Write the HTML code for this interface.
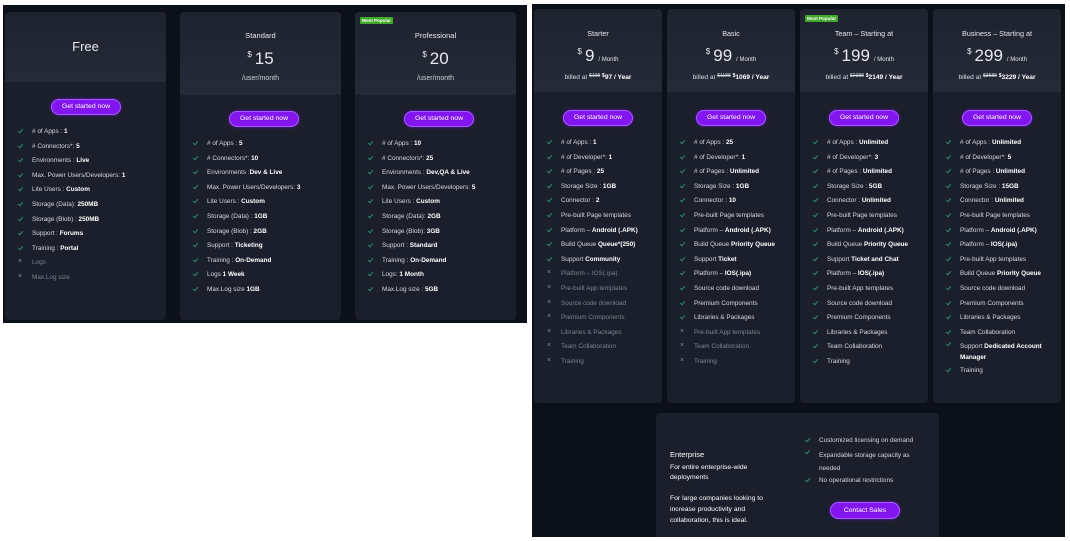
<!DOCTYPE html>
<html><head><meta charset="utf-8"><style>
*{margin:0;padding:0;box-sizing:border-box}
body{width:1070px;height:541px;background:#fff;position:relative;overflow:hidden;font-family:"Liberation Sans",sans-serif;color:#e6e8ee}
.panel{position:absolute;background:#0c1019}
.card{position:absolute;background:#1b1f2b;border-radius:4px;overflow:hidden}
.hd{position:absolute;left:0;top:0;width:100%;background:linear-gradient(#1f2330,#252a37)}
.t{position:absolute;left:0;width:100%;text-align:center;white-space:nowrap}
.btn{position:absolute;height:16px;border-radius:9px;background:#8316ee;border:1px solid #a45cff;color:#fff;font-size:6.8px;line-height:14px;text-align:center;box-shadow:0 0 3px #6a12c4}
ul{position:absolute;list-style:none}
li{height:14.6px;font-size:6.4px;line-height:8px;white-space:nowrap;color:#d5d8e0;position:relative;padding-left:14px}
li::before{content:"";position:absolute;left:1px;top:0px;width:2px;height:4px;border:solid #2d8a68;border-width:0 1.2px 1.2px 0;transform:rotate(40deg)}
li.x{color:#7d828f}
li.x::before{content:"×";border:0;transform:none;width:auto;height:auto;top:-1px;left:0;color:#8a8f9b;font-size:7px}
b{color:#fff}
.badge{position:absolute;background:#41a82a;color:#fff;font-size:4.6px;font-weight:bold;padding:1px 2px;border-radius:1px}
.pr{font-size:17px}
.pr sup{font-size:8px;vertical-align:7px;margin-right:3px}
.mo{font-size:6px;margin-left:4px}
.bl{font-size:6.6px;color:#d9dce4}
.bl s{font-size:5px;vertical-align:2px}
</style></head><body>

<div class="panel" style="left:3px;top:5px;width:524px;height:318px"></div>
<div class="panel" style="left:532px;top:4px;width:533px;height:533px"></div>

<!-- Free -->
<div class="card" style="left:5px;top:12px;width:161px;height:308px">
<div class="hd" style="height:70px"></div>
<div class="t" style="top:27px;font-size:13px">Free</div>
<div class="btn" style="left:46px;top:87px;width:70px">Get started now</div>
<ul style="left:13px;top:116px">
<li># of Apps : <b>1</b></li><li># Connectors*: <b>5</b></li><li>Environments : <b>Live</b></li><li>Max. Power Users/Developers: <b>1</b></li><li>Lite Users : <b>Custom</b></li><li>Storage (Data): <b>250MB</b></li><li>Storage (Blob) : <b>250MB</b></li><li>Support : <b>Forums</b></li><li>Training : <b>Portal</b></li><li class="x">Logs</li><li class="x">Max.Log size</li>
</ul></div>

<!-- Standard -->
<div class="card" style="left:180px;top:12px;width:161px;height:308px">
<div class="hd" style="height:83px"></div>
<div class="t" style="top:19px;font-size:7.5px">Standard</div>
<div class="t pr" style="top:37px"><sup>$</sup>15</div>
<div class="t" style="top:63px;font-size:7px;color:#cdd0d8">/user/month</div>
<div class="btn" style="left:49px;top:99px;width:70px">Get started now</div>
<ul style="left:13px;top:128px">
<li># of Apps : <b>5</b></li><li># Connectors*: <b>10</b></li><li>Environments :<b>Dev &amp; Live</b></li><li>Max. Power Users/Developers: <b>3</b></li><li>Lite Users : <b>Custom</b></li><li>Storage (Data) : <b>1GB</b></li><li>Storage (Blob) : <b>2GB</b></li><li>Support : <b>Ticketing</b></li><li>Training : <b>On-Demand</b></li><li>Logs <b>1 Week</b></li><li>Max.Log size <b>1GB</b></li>
</ul></div>

<!-- Professional -->
<div class="card" style="left:355px;top:12px;width:161px;height:308px">
<div class="hd" style="height:83px"></div>
<div class="badge" style="left:5px;top:5px">Most Popular</div>
<div class="t" style="top:19px;font-size:7.5px">Professional</div>
<div class="t pr" style="top:37px"><sup>$</sup>20</div>
<div class="t" style="top:63px;font-size:7px;color:#cdd0d8">/user/month</div>
<div class="btn" style="left:49px;top:99px;width:70px">Get started now</div>
<ul style="left:13px;top:128px">
<li># of Apps : <b>10</b></li><li># Connectors*: <b>25</b></li><li>Environments : <b>Dev,QA &amp; Live</b></li><li>Max. Power Users/Developers: <b>5</b></li><li>Lite Users : <b>Custom</b></li><li>Storage (Data): <b>2GB</b></li><li>Storage (Blob): <b>3GB</b></li><li>Support : <b>Standard</b></li><li>Training : <b>On-Demand</b></li><li>Logs: <b>1 Month</b></li><li>Max.Log size : <b>5GB</b></li>
</ul></div>

<!-- Starter -->
<div class="card" style="left:534px;top:9px;width:128px;height:394px">
<div class="hd" style="height:83px"></div>
<div class="t" style="top:20px;font-size:7.2px">Starter</div>
<div class="t pr" style="top:37px"><sup>$</sup>9<span class="mo">/ Month</span></div>
<div class="t bl" style="top:64px">billed at <s>$108</s> <b><span style="font-size:5px;vertical-align:2px">$</span>97 / Year</b></div>
<div class="btn" style="left:29px;top:101px;width:70px">Get started now</div>
<ul style="left:13px;top:130px">
<li># of Apps : <b>1</b></li><li># of Developer*: <b>1</b></li><li># of Pages : <b>25</b></li><li>Storage Size : <b>1GB</b></li><li>Connector : <b>2</b></li><li>Pre-built Page templates</li><li>Platform – <b>Android (.APK)</b></li><li>Build Queue <b>Queue*(250)</b></li><li>Support <b>Community</b></li><li class="x">Platform – IOS(.ipa)</li><li class="x">Pre-built App templates</li><li class="x">Source code download</li><li class="x">Premium Components</li><li class="x">Libraries &amp; Packages</li><li class="x">Team Collaboration</li><li class="x">Training</li>
</ul></div>

<!-- Basic -->
<div class="card" style="left:667px;top:9px;width:128px;height:394px">
<div class="hd" style="height:83px"></div>
<div class="t" style="top:20px;font-size:7.2px">Basic</div>
<div class="t pr" style="top:37px"><sup>$</sup>99<span class="mo">/ Month</span></div>
<div class="t bl" style="top:64px">billed at <s>$1188</s> <b><span style="font-size:5px;vertical-align:2px">$</span>1069 / Year</b></div>
<div class="btn" style="left:29px;top:101px;width:70px">Get started now</div>
<ul style="left:13px;top:130px">
<li># of Apps : <b>25</b></li><li># of Developer*: <b>1</b></li><li># of Pages : <b>Unlimited</b></li><li>Storage Size : <b>1GB</b></li><li>Connector : <b>10</b></li><li>Pre-built Page templates</li><li>Platform – <b>Android (.APK)</b></li><li>Build Queue <b>Priority Queue</b></li><li>Support <b>Ticket</b></li><li>Platform – <b>IOS(.ipa)</b></li><li>Source code download</li><li>Premium Components</li><li>Libraries &amp; Packages</li><li class="x">Pre-built App templates</li><li class="x">Team Collaboration</li><li class="x">Training</li>
</ul></div>

<!-- Team -->
<div class="card" style="left:800px;top:9px;width:128px;height:394px">
<div class="hd" style="height:83px"></div>
<div class="badge" style="left:5px;top:6px">Most Popular</div>
<div class="t" style="top:20px;font-size:7.2px">Team – Starting at</div>
<div class="t pr" style="top:37px"><sup>$</sup>199<span class="mo">/ Month</span></div>
<div class="t bl" style="top:64px">billed at <s>$2388</s> <b><span style="font-size:5px;vertical-align:2px">$</span>2149 / Year</b></div>
<div class="btn" style="left:29px;top:101px;width:70px">Get started now</div>
<ul style="left:13px;top:130px">
<li># of Apps : <b>Unlimited</b></li><li># of Developer*: <b>3</b></li><li># of Pages : <b>Unlimited</b></li><li>Storage Size : <b>5GB</b></li><li>Connector : <b>Unlimited</b></li><li>Pre-built Page templates</li><li>Platform – <b>Android (.APK)</b></li><li>Build Queue <b>Priority Queue</b></li><li>Support <b>Ticket and Chat</b></li><li>Platform – <b>IOS(.ipa)</b></li><li>Pre-built App templates</li><li>Source code download</li><li>Premium Components</li><li>Libraries &amp; Packages</li><li>Team Collaboration</li><li>Training</li>
</ul></div>

<!-- Business -->
<div class="card" style="left:933px;top:9px;width:128px;height:394px">
<div class="hd" style="height:83px"></div>
<div class="t" style="top:20px;font-size:7.2px">Business – Starting at</div>
<div class="t pr" style="top:37px"><sup>$</sup>299<span class="mo">/ Month</span></div>
<div class="t bl" style="top:64px">billed at <s>$3588</s> <b><span style="font-size:5px;vertical-align:2px">$</span>3229 / Year</b></div>
<div class="btn" style="left:29px;top:101px;width:70px">Get started now</div>
<ul style="left:13px;top:130px">
<li># of Apps : <b>Unlimited</b></li><li># of Developer*: <b>5</b></li><li># of Pages : <b>Unlimited</b></li><li>Storage Size : <b>15GB</b></li><li>Connector : <b>Unlimited</b></li><li>Pre-built Page templates</li><li>Platform – <b>Android (.APK)</b></li><li>Platform – <b>IOS(.ipa)</b></li><li>Pre-built App templates</li><li>Build Queue <b>Priority Queue</b></li><li>Source code download</li><li>Premium Components</li><li>Libraries &amp; Packages</li><li>Team Collaboration</li><li style="height:26px;line-height:11px;margin-top:-2px">Support <b>Dedicated Account<br>Manager</b></li><li>Training</li>
</ul></div>

<!-- Enterprise -->
<div class="card" style="left:656px;top:413px;width:283px;height:124px;border-radius:4px 4px 0 0">
<div style="position:absolute;left:14px;top:37px;font-size:7.5px;color:#fff">Enterprise</div>
<div style="position:absolute;left:14px;top:50px;font-size:6.8px;line-height:10px;color:#fff;width:100px">For entire enterprise-wide deployments</div>
<div style="position:absolute;left:14px;top:80px;font-size:6.8px;line-height:11px;color:#fff;width:110px">For large companies looking to increase productivity and collaboration, this is ideal.</div>
<ul style="left:149px;top:24px">
<li>Customized licensing on demand</li><li style="height:28px;line-height:13px;margin-top:-3px">Expandable storage capacity as<br>needed</li><li>No operational restrictions</li>
</ul>
<div class="btn" style="left:174px;top:89px;width:70px;height:17px;line-height:15px">Contact Sales</div>
</div>
</body></html>
